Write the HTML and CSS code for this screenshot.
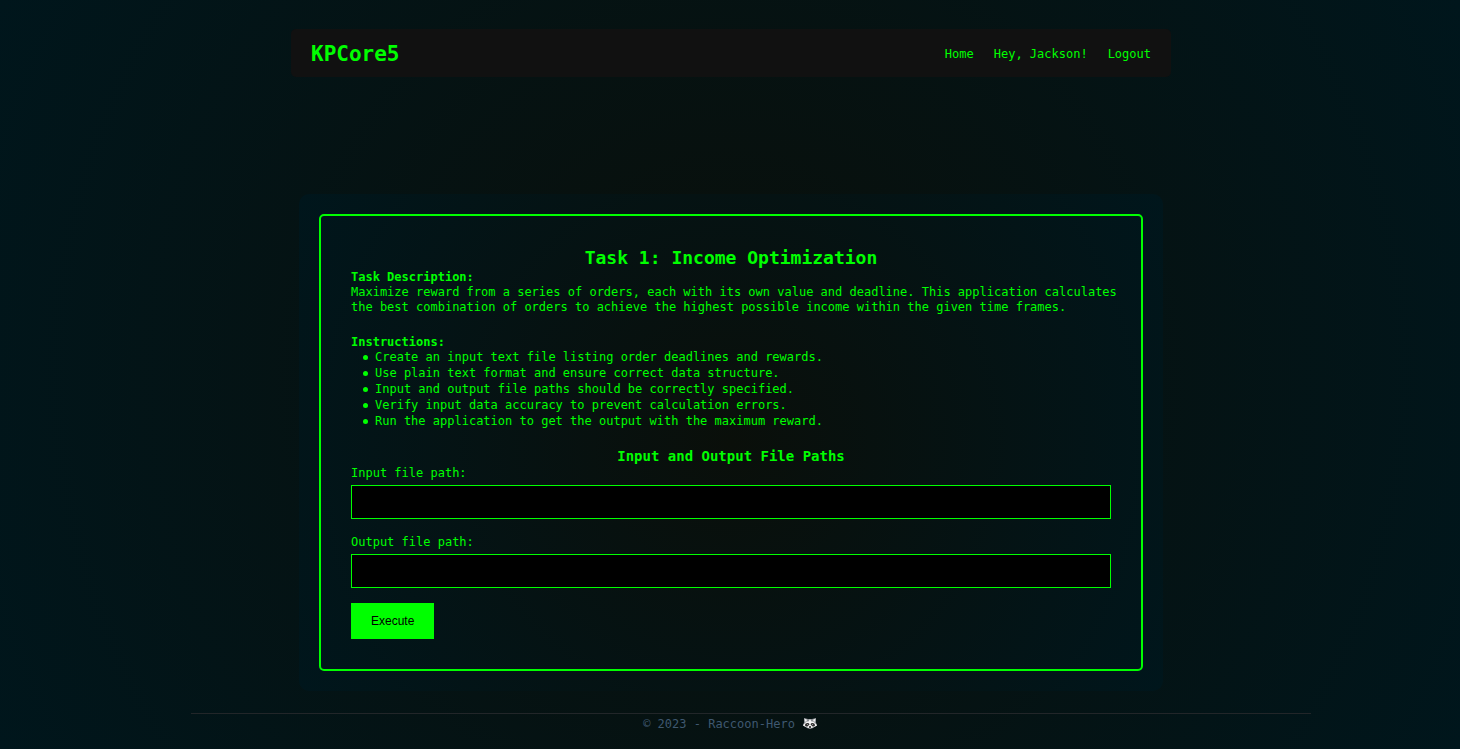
FILE: index.html
```html
<!DOCTYPE html>
<html lang="en">
<head>
<meta charset="utf-8">
<title>KPCore5</title>
<link rel="stylesheet" href="styles.css">
</head>
<body>
<header class="navbar">
  <a class="brand" href="#">KPCore5</a>
  <nav class="links">
    <a href="#">Home</a>
    <a href="#">Hey, Jackson!</a>
    <a href="#">Logout</a>
  </nav>
</header>
<main class="shell">
  <section class="panel">
    <h1 class="title">Task 1: Income Optimization</h1>
    <h2 class="label">Task Description:</h2>
    <p class="text">Maximize reward from a series of orders, each with its own value and deadline. This application calculates the best combination of orders to achieve the highest possible income within the given time frames.</p>
    <h2 class="label">Instructions:</h2>
    <ul class="steps">
      <li>Create an input text file listing order deadlines and rewards.</li>
      <li>Use plain text format and ensure correct data structure.</li>
      <li>Input and output file paths should be correctly specified.</li>
      <li>Verify input data accuracy to prevent calculation errors.</li>
      <li>Run the application to get the output with the maximum reward.</li>
    </ul>
    <form class="form">
      <h2 class="subtitle">Input and Output File Paths</h2>
      <label for="input-path">Input file path:</label>
      <input class="field" type="text" id="input-path">
      <label for="output-path">Output file path:</label>
      <input class="field" type="text" id="output-path">
      <button class="execute" type="button">Execute</button>
    </form>
  </section>
</main>
<footer class="footer">
  <span>© 2023 - Raccoon-Hero</span>
  <svg class="raccoon" viewBox="0 0 28 22" aria-hidden="true">
    <path d="M2 1l8 2h8l8-2v9l2 6-5 3-5 3h-8l-5-3-5-3 2-6z" fill="#85898e"/>
    <path d="M3 2l6 3-5 4zM25 2l-6 3 5 4z" fill="#f0f0f0"/>
    <path d="M1 14l6-6h4l2-4h2l2 4h4l6 6 1 2-6 3-8 3-8-3-6-3z" fill="#f4f4f4"/>
    <path d="M4 16c0-5 5-6 8-4l1 2-4 4-3 0zM24 16c0-5-5-6-8-4l-1 2 4 4 3 0z" fill="#333"/>
    <circle cx="9" cy="14" r="1" fill="#bbb"/><circle cx="19" cy="14" r="1" fill="#bbb"/>
    <ellipse cx="14" cy="19" rx="2" ry="2" fill="#111"/>
  </svg>
</footer>
</body>
</html>
```
FILE: styles.css
```css
* { box-sizing: border-box; }

body {
  margin: 0;
  min-height: 100vh;
  padding: 29px 0 16px 2px;
  display: flex;
  flex-direction: column;
  background: radial-gradient(circle, #0a0f0a, #00161c);
  color: #0f0;
  font: 12px/15px "DejaVu Sans Mono", monospace;
}

h1, h2, p, ul { margin: 0; }

a { color: inherit; text-decoration: none; }

.navbar {
  display: flex;
  align-items: center;
  justify-content: space-between;
  width: calc(100% - 32px);
  max-width: 880px;
  min-height: 48px;
  margin: 0 auto;
  padding: 2px 20px 0;
  background: #111;
  border-radius: 5px;
}

.brand { font-size: 21px; font-weight: 700; line-height: 30px; }

.links { display: flex; gap: 20px; }

.shell {
  width: calc(100% - 32px);
  max-width: 864px;
  margin: 117px auto 0;
  padding: 20px;
  border-radius: 10px;
  background: radial-gradient(circle, #0a0f0a, #00161c);
}

.panel {
  padding: 30px;
  border: 2px solid #0f0;
  border-radius: 5px;
}

.title { font-size: 18px; line-height: 24px; text-align: center; }

.label { font-size: 12px; line-height: 15px; }

.text { margin: 0 -12px 20px 0; }

.steps {
  margin: -1px 0 17px;
  padding-left: 12px;
  line-height: 16px;
  list-style: none;
}

.steps li { display: flex; align-items: center; gap: 7px; }

.steps li::before {
  content: "";
  flex: none;
  width: 5px;
  height: 5px;
  border-radius: 50%;
  background: #0f0;
}

.subtitle {
  font-size: 14px;
  line-height: 20px;
  text-align: center;
}

.form label { display: block; }

.field {
  display: block;
  width: 100%;
  height: 34px;
  margin: 4px 0 16px;
  padding: 8px;
  border: 1px solid #0f0;
  background: #000;
  color: #0f0;
  font: inherit;
}

.execute {
  display: block;
  height: 36px;
  margin-top: -1px;
  padding: 0 20px;
  border: 0;
  background: #0f0;
  color: #000;
  font: 12px "Liberation Sans", sans-serif;
}

.footer {
  display: flex;
  align-items: flex-start;
  justify-content: center;
  gap: 8px;
  margin: 22px 149px 0 189px;
  padding: 3px 42px 0 0;
  border-top: 1px solid #222629;
  color: #3f5870;
}

.raccoon { width: 14px; height: 12px; }
```
